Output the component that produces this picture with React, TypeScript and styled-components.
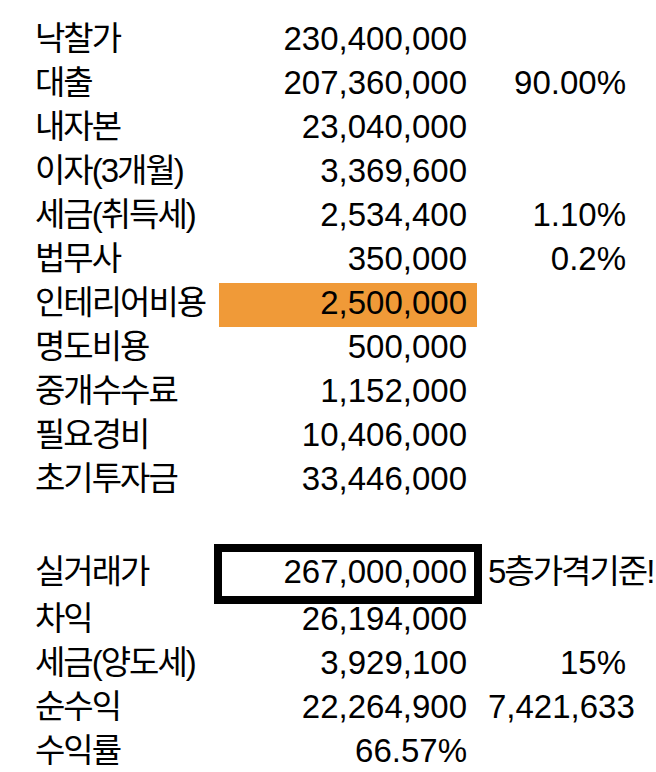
import { FunctionComponent } from "react";
import styled, { createGlobalStyle } from "styled-components";

const GlobalStyle = createGlobalStyle`
  html, body {
    margin: 0;
    padding: 0;
    background: #ffffff;
    overflow: hidden;
  }
  body {
    font-family: "Liberation Sans", Arial, "Noto Sans CJK KR", sans-serif;
    color: #000000;
  }
`;

const Sheet = styled.div`
  padding: 19px 0 0 35px;
  display: grid;
  grid-template-columns: 184px 258px 159px;
  font-size: 33px;
  line-height: 1;
`;

const Row = styled.div<{ $height?: number }>`
  display: contents;
  & > div {
    height: ${(p) => p.$height ?? 44}px;
  }
`;

const Cell = styled.div<{ $align?: "left" | "right"; $fill?: string; $boxed?: boolean }>`
  display: flex;
  align-items: center;
  justify-content: ${(p) => (p.$align === "left" ? "flex-start" : "flex-end")};
  padding: 0 ${(p) => (p.$align === "left" ? 0 : 10)}px 6px
    ${(p) => (p.$align === "left" ? 11 : 0)}px;
  box-sizing: border-box;
  white-space: nowrap;
  background: ${(p) => p.$fill ?? "transparent"};
  outline: ${(p) => (p.$boxed ? "8px solid #000" : "none")};
  outline-offset: -3px;
`;

const Label = styled(Cell)`
  padding-left: 0;
  letter-spacing: -2px;
`;

// Korean text in the value columns uses the same tightened spacing as labels
const Hangul = styled.span`
  letter-spacing: -2px;
`;

type Line = {
  label: string;
  value?: string;
  extra?: string;
  extraAlign?: "left" | "right";
  extraHangul?: boolean;
  fill?: string;
  boxed?: boolean;
  height?: number;
};

const lines: Line[] = [
  { label: "낙찰가", value: "230,400,000" },
  { label: "대출", value: "207,360,000", extra: "90.00%" },
  { label: "내자본", value: "23,040,000" },
  { label: "이자(3개월)", value: "3,369,600" },
  { label: "세금(취득세)", value: "2,534,400", extra: "1.10%" },
  { label: "법무사", value: "350,000", extra: "0.2%" },
  { label: "인테리어비용", value: "2,500,000", fill: "#f09a38" },
  { label: "명도비용", value: "500,000" },
  { label: "중개수수료", value: "1,152,000" },
  { label: "필요경비", value: "10,406,000" },
  { label: "초기투자금", value: "33,446,000" },
  { label: "", height: 46 },
  {
    label: "실거래가",
    value: "267,000,000",
    extra: "5층가격기준!",
    extraAlign: "left",
    extraHangul: true,
    boxed: true,
    height: 50,
  },
  { label: "차익", value: "26,194,000" },
  { label: "세금(양도세)", value: "3,929,100", extra: "15%" },
  { label: "순수익", value: "22,264,900", extra: "7,421,633", extraAlign: "left" },
  { label: "수익률", value: "66.57%" },
];

const App: FunctionComponent = () => {
  return (
    <>
      <GlobalStyle />
      <Sheet>
        {lines.map((line, i) => (
          <Row key={i} $height={line.height}>
            <Label $align="left">{line.label}</Label>
            <Cell $fill={line.fill} $boxed={line.boxed}>
              {line.value}
            </Cell>
            <Cell $align={line.extraAlign}>
              {line.extraHangul ? <Hangul>{line.extra}</Hangul> : line.extra}
            </Cell>
          </Row>
        ))}
      </Sheet>
    </>
  );
};

export default App;
